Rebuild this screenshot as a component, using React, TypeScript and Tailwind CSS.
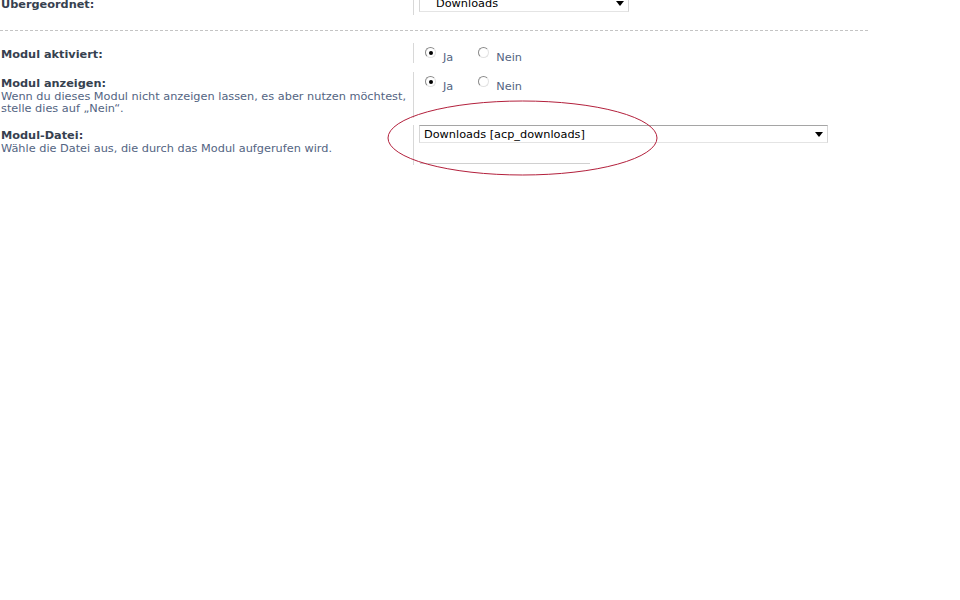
import React from 'react';

function Radio({ checked }: { checked?: boolean }) {
  return (
    <span className="mt-[4px] flex h-[11px] w-[11px] items-center justify-center rounded-full border border-t-[#8a8a8a] border-l-[#8a8a8a] border-r-[#e2e2e2] border-b-[#e2e2e2] bg-white">
      {checked && <span className="h-[4px] w-[4px] rounded-full bg-black" />}
    </span>
  );
}

function YesNo() {
  return (
    <div className="flex items-start pl-[11px] text-[#536482]">
      <Radio checked />
      <span className="ml-[7px] mt-[8px]">Ja</span>
      <span className="ml-[25px]">
        <Radio />
      </span>
      <span className="ml-[7px] mt-[8px]">Nein</span>
    </div>
  );
}

function Select({ text, width, indent }: { text: string; width: string; indent?: boolean }) {
  return (
    <div
      className={`ml-[5px] flex h-[18px] items-center justify-between border border-t-[#a5a5a5] border-l-[#d6d6d6] border-r-[#d6d6d6] border-b-[#e4e4e4] bg-white pt-[1px] text-black ${width} ${indent ? 'pl-[16px]' : 'pl-[4px]'} pr-[4px]`}
    >
      <span>{text}</span>
      <svg width="8" height="5" viewBox="0 0 8 5">
        <path d="M0 0h8L4 5z" fill="#000" />
      </svg>
    </div>
  );
}

export default function App() {
  return (
    <div className="relative h-[600px] w-[960px] overflow-hidden bg-white font-['DejaVu_Sans',Verdana,sans-serif] text-[11.3px] leading-[14px]">
      {/* Übergeordnet */}
      <div className="-mt-[6px] flex h-[21px]">
        <div className="w-[413px] pt-[4px] pl-[1px] font-bold text-[#36414f]">Übergeordnet:</div>
        <div className="border-l border-[#d8d8d8]">
          <Select text="Downloads" width="w-[210px]" indent />
        </div>
      </div>

      <div className="mt-[15px] w-[868px] border-t border-dashed border-[#c4c4c4]" />

      {/* Modul aktiviert */}
      <div className="mt-[12px] flex h-[20px]">
        <div className="w-[413px] pt-[5px] pl-[1px] font-bold text-[#36414f]">Modul aktiviert:</div>
        <div className="border-l border-[#d8d8d8]">
          <YesNo />
        </div>
      </div>

      {/* Modul anzeigen */}
      <div className="mt-[9px] flex h-[46px]">
        <div className="w-[413px] pt-[5px] pl-[1px]">
          <div className="font-bold text-[#36414f]">Modul anzeigen:</div>
          <div className="leading-[12px] text-[#536482]">
            Wenn du dieses Modul nicht anzeigen lassen, es aber nutzen möchtest,
            <br />
            stelle dies auf „Nein“.
          </div>
        </div>
        <div className="border-l border-[#d8d8d8]">
          <YesNo />
        </div>
      </div>

      {/* Modul-Datei */}
      <div className="mt-[7px] flex h-[40px]">
        <div className="w-[413px] pt-[4px] pl-[1px]">
          <div className="font-bold text-[#36414f]">Modul-Datei:</div>
          <div className="leading-[12px] text-[#536482]">Wähle die Datei aus, die durch das Modul aufgerufen wird.</div>
        </div>
        <div className="border-l border-[#d8d8d8]">
          <Select text="Downloads [acp_downloads]" width="w-[409px]" />
          <div className="ml-[6px] mt-[20px] h-px w-[170px] bg-[#d0d0d0]" />
        </div>
      </div>

      {/* red annotation ellipse */}
      <svg className="pointer-events-none absolute left-0 top-0" width="960" height="600">
        <ellipse cx="522.5" cy="138" rx="134.5" ry="37" fill="none" stroke="#b3203c" strokeWidth="1" />
      </svg>
    </div>
  );
}
